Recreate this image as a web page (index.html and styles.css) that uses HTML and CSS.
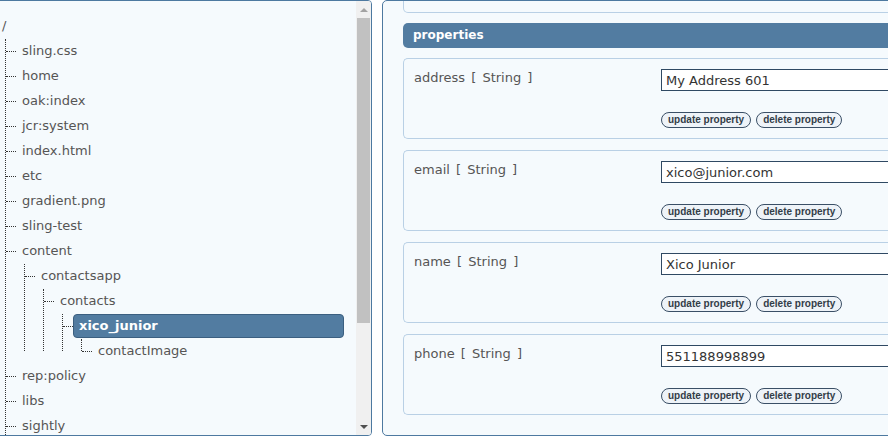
FILE: index.html
```html
<!DOCTYPE html>
<html lang="en">
<head>
  <meta charset="UTF-8">
  <meta name="viewport" content="width=device-width, initial-scale=1.0">
  <title>Sling Resource Editor</title>
  <link rel="stylesheet" href="styles.css">
</head>
<body>
  <div class="tree-panel">
    <div class="tree">
      <div class="node root-node"><span class="label">/</span></div>
      <ul class="branch root-branch">
        <li><div class="node"><span class="conn"></span><span class="label">sling.css</span></div></li>
        <li><div class="node"><span class="conn"></span><span class="label">home</span></div></li>
        <li><div class="node"><span class="conn"></span><span class="label">oak:index</span></div></li>
        <li><div class="node"><span class="conn"></span><span class="label">jcr:system</span></div></li>
        <li><div class="node"><span class="conn"></span><span class="label">index.html</span></div></li>
        <li><div class="node"><span class="conn"></span><span class="label">etc</span></div></li>
        <li><div class="node"><span class="conn"></span><span class="label">gradient.png</span></div></li>
        <li><div class="node"><span class="conn"></span><span class="label">sling-test</span></div></li>
        <li>
          <div class="node"><span class="conn"></span><span class="label">content</span></div>
          <ul class="branch">
            <li>
              <div class="node"><span class="conn"></span><span class="label">contactsapp</span></div>
              <ul class="branch">
                <li>
                  <div class="node"><span class="conn"></span><span class="label">contacts</span></div>
                  <ul class="branch">
                    <li>
                      <div class="node"><span class="conn"></span><span class="label selected">xico_junior</span></div>
                      <ul class="branch">
                        <li><div class="node"><span class="conn"></span><span class="label">contactImage</span></div></li>
                      </ul>
                    </li>
                  </ul>
                </li>
              </ul>
            </li>
          </ul>
        </li>
        <li><div class="node"><span class="conn"></span><span class="label">rep:policy</span></div></li>
        <li><div class="node"><span class="conn"></span><span class="label">libs</span></div></li>
        <li><div class="node"><span class="conn"></span><span class="label">sightly</span></div></li>
      </ul>
    </div>
    <div class="scrollbar">
      <div class="arrow arrow-up"></div>
      <div class="thumb"></div>
      <div class="track"></div>
      <div class="arrow arrow-down"></div>
    </div>
  </div>

  <div class="editor-panel">
    <div class="top-box"></div>
    <div class="section-header">properties</div>

    <div class="prop">
      <div class="prop-name">address [ String ]</div>
      <div class="prop-edit">
        <input type="text" class="prop-value" value="My Address 601">
        <div class="prop-actions">
          <button class="pill">update property</button>
          <button class="pill">delete property</button>
        </div>
      </div>
    </div>

    <div class="prop">
      <div class="prop-name">email [ String ]</div>
      <div class="prop-edit">
        <input type="text" class="prop-value" value="xico@junior.com">
        <div class="prop-actions">
          <button class="pill">update property</button>
          <button class="pill">delete property</button>
        </div>
      </div>
    </div>

    <div class="prop">
      <div class="prop-name">name [ String ]</div>
      <div class="prop-edit">
        <input type="text" class="prop-value" value="Xico Junior">
        <div class="prop-actions">
          <button class="pill">update property</button>
          <button class="pill">delete property</button>
        </div>
      </div>
    </div>

    <div class="prop">
      <div class="prop-name">phone [ String ]</div>
      <div class="prop-edit">
        <input type="text" class="prop-value" value="551188998899">
        <div class="prop-actions">
          <button class="pill">update property</button>
          <button class="pill">delete property</button>
        </div>
      </div>
    </div>
  </div>
</body>
</html>
```

FILE: styles.css
```css
body {
  margin: 0;
  padding: 0;
  background-color: #ffffff;
  font-family: "DejaVu Sans", Verdana, sans-serif;
  font-size: 13px;
  color: #555555;
  display: flex;
  align-items: flex-start;
  overflow: hidden;
  height: 447px;
}

/* left: resource tree */
.tree-panel {
  margin-left: -1px;
  width: 373px;
  height: 436px;
  box-sizing: border-box;
  border: 1px solid #4d79a0;
  border-radius: 0 4px 4px 0;
  background-color: #f5fafd;
  display: flex;
  overflow: hidden;
  flex-shrink: 0;
}

.tree {
  flex: 1;
  overflow: hidden;
  padding-top: 13px;
}

.tree ul {
  list-style: none;
  margin: 0;
  padding: 0 0 0 1px;
  position: relative;
}

.branch::before {
  content: "";
  position: absolute;
  left: 0;
  top: 0;
  bottom: 12px;
  border-left: 1px dotted #333333;
}

.root-branch {
  margin-left: 5px !important;
  padding-bottom: 40px !important;
}

.branch .branch {
  margin-left: 18px;
}

.node {
  display: flex;
  align-items: center;
  height: 24px;
  margin-bottom: 1px;
  padding-right: 12px;
}

.conn {
  width: 10px;
  border-top: 1px dotted #333333;
  flex-shrink: 0;
}

.label {
  line-height: 22px;
  padding: 0 5px;
  border: 1px solid transparent;
  white-space: nowrap;
}

.root-node .label {
  padding-left: 1px;
}

.label.selected {
  flex: 1;
  background-color: #527ca1;
  border-color: #3b5f80;
  border-radius: 4px;
  color: #ffffff;
  font-weight: bold;
}

.scrollbar {
  width: 15px;
  background-color: #f0f0f0;
  display: flex;
  flex-direction: column;
  flex-shrink: 0;
}

.arrow {
  height: 17px;
  display: flex;
  align-items: center;
  justify-content: center;
}

.arrow::after {
  content: "";
  border-left: 4px solid transparent;
  border-right: 4px solid transparent;
}

.arrow-up::after {
  border-bottom: 4px solid #a3a3a3;
}

.arrow-down::after {
  border-top: 4px solid #505050;
}

.thumb {
  height: 305px;
  margin: 0 1px;
  background-color: #c1c1c1;
}

.track {
  flex: 1;
}

/* right: property editor */
.editor-panel {
  margin-left: 10px;
  width: 600px;
  height: 436px;
  box-sizing: border-box;
  border: 1px solid #4d79a0;
  border-radius: 5px;
  background-color: #f5fafd;
  padding: 0 0 0 20px;
  flex-shrink: 0;
}

.top-box {
  height: 11px;
  border: 1px solid #b9d0e5;
  border-top: none;
  border-radius: 0 0 5px 5px;
  margin-bottom: 10px;
}

.section-header {
  height: 25px;
  line-height: 25px;
  background-color: #527ca1;
  color: #ffffff;
  font-weight: bold;
  font-size: 12px;
  padding-left: 10px;
  border-radius: 5px 0 0 5px;
  margin-bottom: 10px;
}

.prop {
  display: flex;
  height: 81px;
  box-sizing: border-box;
  border: 1px solid #b9d0e5;
  border-right: none;
  border-radius: 5px 0 0 5px;
  padding: 10px 0 10px 10px;
  margin-bottom: 11px;
}

.prop-name {
  width: 247px;
  line-height: 17px;
  word-spacing: 2px;
  flex-shrink: 0;
}

.prop-edit {
  flex: 1;
}

.prop-value {
  display: block;
  width: 100%;
  height: 22px;
  box-sizing: border-box;
  border: 1px solid #2f4963;
  background-color: #ffffff;
  padding: 0 4px;
  font-family: "DejaVu Sans", Verdana, sans-serif;
  font-size: 13px;
  color: #333333;
  margin: 0 0 21px 0;
  outline: none;
}

.prop-actions {
  display: flex;
  gap: 5px;
}

.pill {
  height: 16px;
  padding: 0 6px;
  border: 1px solid #3a4f66;
  border-radius: 8px;
  background-color: #eef3f8;
  color: #333d48;
  font-family: "Liberation Sans", Arial, sans-serif;
  font-weight: bold;
  font-size: 10px;
  line-height: 14px;
  cursor: pointer;
}
```
